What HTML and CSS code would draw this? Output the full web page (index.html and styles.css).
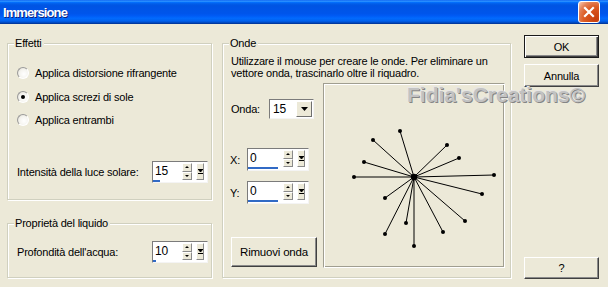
FILE: index.html
```html
<!DOCTYPE html>
<html lang="it">
<head>
  <meta charset="UTF-8">
  <title>Immersione</title>
  <link rel="stylesheet" href="styles.css">
</head>
<body>
  <div class="window">
    <div class="titlebar">
      <span class="title">Immersione</span>
      <span class="close">
        <svg width="12" height="12" viewBox="0 0 12 12"><path d="M2 2 L10 10 M10 2 L2 10" stroke="#fff" stroke-width="2.2" stroke-linecap="square"/></svg>
      </span>
    </div>

    <div class="content">
      <div class="col-left">
        <div class="group effetti">
          <span class="group-title">Effetti</span>
          <div class="radios">
            <label class="radio"><span class="radio-dot"></span>Applica distorsione rifrangente</label>
            <label class="radio"><span class="radio-dot checked"></span>Applica screzi di sole</label>
            <label class="radio"><span class="radio-dot"></span>Applica entrambi</label>
          </div>
          <div class="field-row">
            <span class="field-label">Intensità della luce solare:</span>
            <div class="spin">
              <div class="spin-field"><span class="spin-value">15</span><span class="spin-bar" style="width:7px"></span></div>
              <div class="spin-arrows"><span class="arrow up"></span><span class="arrow down"></span></div>
              <div class="spin-drop"><svg width="5" height="6" viewBox="0 0 5 6"><path d="M0 0 H5 L2.5 3 Z M0 4.5 H5" stroke="#000" fill="#000" stroke-width="1"/></svg></div>
            </div>
          </div>
        </div>

        <div class="group liquido">
          <span class="group-title">Proprietà del liquido</span>
          <div class="field-row">
            <span class="field-label">Profondità dell'acqua:</span>
            <div class="spin">
              <div class="spin-field"><span class="spin-value">10</span><span class="spin-bar" style="width:3px"></span></div>
              <div class="spin-arrows"><span class="arrow up"></span><span class="arrow down"></span></div>
              <div class="spin-drop"><svg width="5" height="6" viewBox="0 0 5 6"><path d="M0 0 H5 L2.5 3 Z M0 4.5 H5" stroke="#000" fill="#000" stroke-width="1"/></svg></div>
            </div>
          </div>
        </div>
      </div>

      <div class="group onde">
        <span class="group-title">Onde</span>
        <p class="hint">Utilizzare il mouse per creare le onde. Per eliminare un<br>vettore onda, trascinarlo oltre il riquadro.</p>
        <div class="onde-main">
          <div class="onde-controls">
            <div class="ctl-row onda-row">
              <span class="onda-label">Onda:</span>
              <div class="combo">
                <span class="combo-value">15</span>
                <span class="combo-btn"><svg width="7" height="4" viewBox="0 0 7 4"><path d="M0 0 H7 L3.5 4 Z" fill="#000"/></svg></span>
              </div>
            </div>
            <div class="ctl-row xy-row x-row">
              <span class="xy-label">X:</span>
              <div class="spin spin-wide">
                <div class="spin-field"><span class="spin-value">0</span><span class="spin-bar" style="width:30px"></span></div>
                <div class="spin-arrows"><span class="arrow up"></span><span class="arrow down"></span></div>
                <div class="spin-drop"><svg width="5" height="6" viewBox="0 0 5 6"><path d="M0 0 H5 L2.5 3 Z M0 4.5 H5" stroke="#000" fill="#000" stroke-width="1"/></svg></div>
              </div>
            </div>
            <div class="ctl-row xy-row y-row">
              <span class="xy-label">Y:</span>
              <div class="spin spin-wide">
                <div class="spin-field"><span class="spin-value">0</span><span class="spin-bar" style="width:30px"></span></div>
                <div class="spin-arrows"><span class="arrow up"></span><span class="arrow down"></span></div>
                <div class="spin-drop"><svg width="5" height="6" viewBox="0 0 5 6"><path d="M0 0 H5 L2.5 3 Z M0 4.5 H5" stroke="#000" fill="#000" stroke-width="1"/></svg></div>
              </div>
            </div>
            <button type="button" class="btn remove-btn">Rimuovi onda</button>
          </div>

          <div class="wave-box">
            <svg width="180" height="183" viewBox="0 0 180 183">
              <g stroke="#000" stroke-width="1">
                <line x1="90" y1="93" x2="76" y2="47"/>
                <line x1="90" y1="93" x2="49" y2="56"/>
                <line x1="90" y1="93" x2="123" y2="61"/>
                <line x1="90" y1="93" x2="135" y2="74"/>
                <line x1="90" y1="93" x2="40" y2="78"/>
                <line x1="90" y1="93" x2="30" y2="93"/>
                <line x1="90" y1="93" x2="170" y2="91"/>
                <line x1="90" y1="93" x2="158" y2="110"/>
                <line x1="90" y1="93" x2="61" y2="114"/>
                <line x1="90" y1="93" x2="141" y2="137"/>
                <line x1="90" y1="93" x2="82" y2="139"/>
                <line x1="90" y1="93" x2="119" y2="148"/>
                <line x1="90" y1="93" x2="61" y2="150"/>
                <line x1="90" y1="93" x2="90" y2="162"/>
              </g>
              <g fill="#000">
                <circle cx="90" cy="93" r="3.2"/>
                <circle cx="76" cy="47" r="2"/>
                <circle cx="49" cy="56" r="2"/>
                <circle cx="123" cy="61" r="2"/>
                <circle cx="135" cy="74" r="2"/>
                <circle cx="40" cy="78" r="2"/>
                <circle cx="30" cy="93" r="2"/>
                <circle cx="170" cy="91" r="2"/>
                <circle cx="158" cy="110" r="2"/>
                <circle cx="61" cy="114" r="2"/>
                <circle cx="141" cy="137" r="2"/>
                <circle cx="82" cy="139" r="2"/>
                <circle cx="119" cy="148" r="2"/>
                <circle cx="61" cy="150" r="2"/>
                <circle cx="90" cy="162" r="2"/>
              </g>
            </svg>
          </div>
        </div>
      </div>

      <div class="col-buttons">
        <button type="button" class="btn btn-default">OK</button>
        <button type="button" class="btn btn-cancel">Annulla</button>
        <button type="button" class="btn help-btn">?</button>
      </div>
    </div>

    <div class="watermark">Fidia'sCreations©</div>
  </div>
</body>
</html>
```

FILE: styles.css
```css
* {
  box-sizing: border-box;
}
body {
  margin: 0;
  background: #ece9d8;
  font-family: "Liberation Sans", Arial, sans-serif;
  font-size: 11px;
  letter-spacing: -0.2px;
  color: #000;
}
.window {
  position: relative;
  width: 608px;
  height: 287px;
  background: #ece9d8;
  overflow: hidden;
}

/* title bar */
.titlebar {
  height: 24px;
  display: flex;
  align-items: center;
  justify-content: space-between;
  padding: 0 8px 0 3px;
  background: linear-gradient(to bottom, #0058ee 0%, #3593ff 4%, #288eff 6%, #127dff 8%, #036ffc 10%, #0262ee 14%, #0057e5 20%, #0054e3 24%, #0055eb 56%, #005bf5 66%, #026afe 76%, #0062ef 86%, #0052d6 92%, #0040ab 96%, #003092 100%);
}
.title {
  color: #fff;
  font-weight: bold;
  font-size: 13px;
  letter-spacing: -0.9px;
  text-shadow: 1px 1px 0 #0a1f7d;
}
.close {
  width: 22px;
  height: 22px;
  display: flex;
  align-items: center;
  justify-content: center;
  border: 1px solid #fff;
  border-radius: 3px;
  background: radial-gradient(circle at 85% 85%, #c63d0a 0%, #dc5a22 50%, #e3835a 75%, #f5c0a5 95%);
}

/* layout */
.content {
  display: flex;
  height: 263px;
  padding: 11px 9px 0 7px;
}
.col-left {
  width: 205px;
  margin-right: 10px;
  display: flex;
  flex-direction: column;
}
.col-buttons {
  width: 75px;
  height: 244px;
  display: flex;
  flex-direction: column;
}

/* group boxes */
.group {
  position: relative;
  border: 1px solid #d0d0bf;
  box-shadow: inset 1px 1px 0 #fff, 1px 1px 0 #fff;
}
.group-title {
  position: absolute;
  top: -7px;
  left: 6px;
  padding: 0 2px 0 1px;
  line-height: 13px;
  background: #ece9d8;
}
.effetti {
  margin-top: 8px;
  height: 157px;
  padding: 22px 3px 16px 9px;
  display: flex;
  flex-direction: column;
}
.liquido {
  margin-top: 23px;
  height: 55px;
  padding: 17px 3px 14px 9px;
}
.onde {
  margin-top: 8px;
  margin-right: 13px;
  width: 289px;
  height: 235px;
  padding: 11px 5px 9px 8px;
  display: flex;
  flex-direction: column;
}

/* radios */
.radios {
  display: flex;
  flex-direction: column;
  gap: 9.5px;
}
.radio {
  height: 14px;
  display: flex;
  align-items: center;
  gap: 6px;
}
.radio-dot {
  width: 12px;
  height: 12px;
  border-radius: 50%;
  border: 1px solid;
  border-color: #9a9a9a #fff #fff #9a9a9a;
  background: radial-gradient(circle at 60% 60%, #fff 0%, #f4f3ee 55%, #d6d3c6 100%);
  display: flex;
  align-items: center;
  justify-content: center;
}
.radio-dot.checked::after {
  content: "";
  width: 4px;
  height: 4px;
  border-radius: 50%;
  background: #000;
}

/* label + spin rows */
.field-row {
  margin-top: auto;
  display: flex;
  align-items: center;
}
.field-label {
  width: 135px;
}

.spin {
  width: 56px;
  height: 22px;
  display: flex;
  align-items: flex-start;
  padding: 1px 3px 0 0;
  background: #fff;
  border: 1px solid;
  border-color: #7b7b7b #f4f4f4 #f4f4f4 #7b7b7b;
}
.spin-wide {
  width: 62px;
  height: 23px;
}
.spin-field {
  flex: 1;
  height: 19px;
  position: relative;
  padding-left: 2px;
  font-size: 12px;
  line-height: 16px;
}
.spin-bar {
  position: absolute;
  left: 0;
  bottom: 0;
  height: 2px;
  background: #316ac5;
}
.spin-arrows {
  width: 10px;
  height: 17px;
  display: flex;
  flex-direction: column;
  margin-right: 4px;
}
.arrow {
  flex: 1;
  background: #ece9d8;
  border: 1px solid;
  border-color: #fff #8a8a8a #8a8a8a #fff;
  display: flex;
  align-items: center;
  justify-content: center;
}
.arrow::after {
  content: "";
  border-left: 2px solid transparent;
  border-right: 2px solid transparent;
}
.arrow.up::after {
  border-bottom: 2px solid #000;
}
.arrow.down::after {
  border-top: 2px solid #000;
}
.spin-drop {
  width: 8px;
  height: 17px;
  background: #ece9d8;
  border: 1px solid;
  border-color: #fff #8a8a8a #8a8a8a #fff;
  display: flex;
  align-items: center;
  justify-content: center;
}

/* onde */
.hint {
  margin: 0 0 4px;
  line-height: 12px;
}
.onde-main {
  flex: 1;
  display: flex;
}
.onde-controls {
  width: 92px;
  display: flex;
  flex-direction: column;
  padding-top: 16px;
}
.ctl-row {
  display: flex;
  align-items: center;
}
.onda-label {
  width: 38px;
}
.combo {
  width: 45px;
  height: 20px;
  display: flex;
  align-items: center;
  justify-content: space-between;
  padding: 0 1px 0 3px;
  background: #fff;
  border: 1px solid;
  border-color: #7b7b7b #f4f4f4 #f4f4f4 #7b7b7b;
  font-size: 12px;
}
.combo-btn {
  width: 16px;
  height: 16px;
  display: flex;
  align-items: center;
  justify-content: center;
  background: #ece9d8;
  border: 1px solid;
  border-color: #fff #6f6f6f #6f6f6f #fff;
}
.xy-label {
  width: 17px;
  margin-left: -1px;
}
.x-row {
  margin-top: 29px;
}
.y-row {
  margin-top: 10px;
}
.wave-box {
  width: 182px;
  height: 185px;
  border: 1px solid;
  border-color: #a09e90 #fff #fff #a09e90;
  box-shadow: inset 1px 1px 0 #fff, inset -1px -1px 0 #a09e90;
}
.wave-box svg {
  display: block;
}

/* buttons */
.btn {
  display: block;
  width: 75px;
  height: 23px;
  padding: 0;
  font-family: "Liberation Sans", Arial, sans-serif;
  font-size: 11px;
  letter-spacing: -0.2px;
  color: #000;
  background: #ece9d8;
  border: 1px solid;
  border-color: #fff #404040 #404040 #fff;
  box-shadow: inset -1px -1px 0 #8a8a8a;
}
.btn-default {
  border-color: #1a1a1a;
  box-shadow: inset 1px 1px 0 #fff, inset -1px -1px 0 #404040, inset -2px -2px 0 #8a8a8a;
}
.btn-cancel {
  margin-top: 6px;
}
.help-btn {
  margin-top: auto;
  height: 22px;
}
.remove-btn {
  width: 86px;
  height: 30px;
  margin-top: 33px;
  font-size: 11.5px;
}

.watermark {
  position: absolute;
  left: 407px;
  top: 83px;
  font-size: 21px;
  font-weight: bold;
  letter-spacing: 0;
  color: #c2c2c2;
  text-shadow: 1px 1px 0 #858585, -1px -1px 0 #e6e6e6;
}
```
